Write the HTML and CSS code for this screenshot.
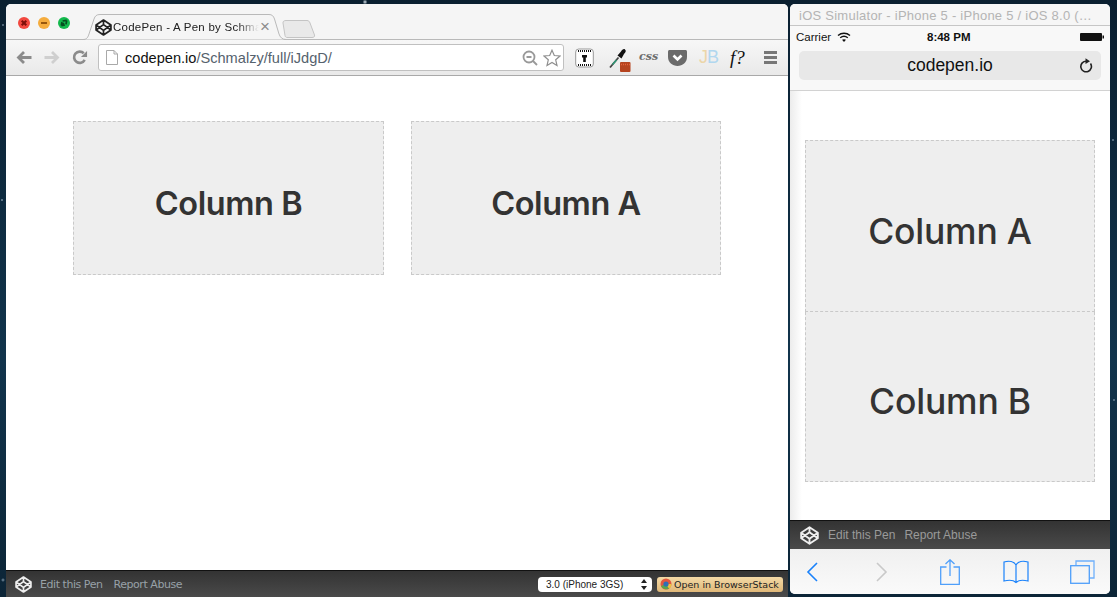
FILE: index.html
```html
<!DOCTYPE html>
<html lang="en">
<head>
  <meta charset="UTF-8">
  <title>CodePen - A Pen by Schmalzy</title>
  <link rel="stylesheet" href="styles.css">
</head>
<body>
  <svg class="defs" width="0" height="0">
    <symbol id="cp" viewBox="0 0 24 24">
      <path d="M12 1.5 22.5 8.5V15.5L12 22.5 1.5 15.5V8.5ZM12 1.5V8M12 16V22.5M1.5 8.5 12 16 22.5 8.5M1.5 15.5 12 8 22.5 15.5" fill="none" stroke="currentColor" stroke-width="2.4" stroke-linejoin="round"/>
    </symbol>
  </svg>

  <!-- browser window -->
  <div class="window browser">
    <div class="tabstrip">
      <div class="lights">
        <svg class="light" viewBox="0 0 12 12"><circle cx="6" cy="6" r="6" fill="#f2483f"/><path d="M3.7 3.7 8.3 8.3M8.3 3.7 3.7 8.3" stroke="#7e0f0a" stroke-width="2"/></svg>
        <svg class="light" viewBox="0 0 12 12"><circle cx="6" cy="6" r="6" fill="#f5ac3d"/><path d="M3 6H9" stroke="#97560c" stroke-width="2"/></svg>
        <svg class="light" viewBox="0 0 12 12"><circle cx="6" cy="6" r="6" fill="#12b94c"/><path d="M3.3 8.7 6 6M8.7 3.3 4.6 4M8.7 3.3 8 7.4M3.3 8.7 4 5M3.3 8.7 7 8" stroke="#064e20" stroke-width="1.7"/></svg>
      </div>
      <div class="tab">
        <svg class="tab-shape" viewBox="0 0 210 26" width="210" height="26"><path d="M0 25.5H3C7 25.5 8 23 9 20L14 5C15 2 16.500 .5 20 .5H189C192 .5 193.500 2 194.500 5L199 20C200 23 202 25.500 206 25.500H210" fill="#f5f5f5" stroke="#b9b9b9"/></svg>
        <svg class="tab-icon"><use href="#cp"/></svg>
        <span class="tab-title">CodePen - A Pen by Schma</span>
        <span class="tab-close">×</span>
      </div>
      <svg class="newtab" viewBox="0 0 34 18" width="34" height="18"><path d="M5 17.500H30C32 17.500 33 16.500 32.500 15L28 3C27.500 1.500 26.500 .5 25 .5H4C2 .5 .7 1.500 1 3L3 15.500C3.200 16.800 4 17.500 5 17.500Z" fill="#e9e9e9" stroke="#c4c4c4"/></svg>
    </div>

    <div class="toolbar">
      <svg class="nav" viewBox="0 0 16 14"><path d="M8 1.500 2.500 7 8 12.500M3 7H15.500" fill="none" stroke="#8b8b8b" stroke-width="2.800"/></svg>
      <svg class="nav" viewBox="0 0 16 14"><path d="M8 1.500 13.500 7 8 12.500M13 7H.5" fill="none" stroke="#cfcfcf" stroke-width="2.800"/></svg>
      <svg class="nav" viewBox="0 0 16 16"><path d="M13 10.500A6 6 0 1 1 12 3.500" fill="none" stroke="#8b8b8b" stroke-width="2.800"/><path d="M15.500 1V7.500H9Z" fill="#8b8b8b"/></svg>
      <div class="omnibox">
        <svg class="page-icon" viewBox="0 0 12 15"><path d="M.5.5H8L11.500 4V14.500H.5ZM8 .5V4H11.500" fill="#fff" stroke="#a9a9a9"/></svg>
        <span class="url"><span class="host">codepen.io</span>/Schmalzy/full/iJdgD/</span>
        <svg class="zoom-icon" viewBox="0 0 16 16"><circle cx="7" cy="7" r="5.500" fill="none" stroke="#999" stroke-width="1.800"/><path d="M4.500 7H9.500M11 11 15 15" stroke="#999" stroke-width="1.800"/></svg>
        <svg class="star-icon" viewBox="0 0 18 18"><path d="M9 1.200 11.300 6.500 17 7 12.700 10.800 14 16.500 9 13.500 4 16.500 5.300 10.800 1 7 6.700 6.500Z" fill="#fff" stroke="#8f8f8f" stroke-width="1.200"/></svg>
      </div>
      <svg class="ext ext-ruler" viewBox="0 0 19 20"><rect x=".7" y="1" width="17.600" height="18" rx="3" fill="#fff" stroke="#999"/><path d="M3 3H16M3 17H16" stroke="#111" stroke-width="2" stroke-dasharray="1 1"/><path d="M7 7H12V9.500H10.800V14H8.200V9.500H7Z" fill="#111"/></svg>
      <svg class="ext ext-dropper" viewBox="0 0 22 24"><path d="M1 19.500 9.500 9.500" stroke="#444" stroke-width="1.800"/><path d="M3.500 16.500 7.500 12" stroke="#2c9a76" stroke-width="1.400"/><path d="M8.500 7.500 12 3.500C13 1.500 15 .5 16 1.500 17.500 2.800 16.500 4.500 15 6L12.500 10.500Z" fill="#111"/><rect x="11" y="14" width="10.500" height="10" rx="1" fill="#b5431e"/><path d="M12 16.500H21" stroke="#e5623a" stroke-width="1.500" stroke-dasharray="1 1"/></svg>
      <span class="ext-css">css</span>
      <svg class="ext ext-pocket" viewBox="0 0 19 16"><path d="M1.500 0H17.500C18.300 0 19 .7 19 1.500V7C19 12.500 14.500 16 9.500 16S0 12.500 0 7V1.500C0 .7.7 0 1.500 0Z" fill="#6b6b6b"/><path d="M5.500 5.500 9.500 9.500 13.500 5.500" fill="none" stroke="#fff" stroke-width="2.600"/></svg>
      <span class="ext-jb"><span class="j">J</span><span class="b">B</span></span>
      <span class="ext-f">f?</span>
      <div class="menu"><i></i><i></i><i></i></div>
    </div>

    <div class="page">
      <div class="cols">
        <div class="col">Column B</div>
        <div class="col">Column A</div>
      </div>
    </div>

    <div class="footer">
      <svg class="cp-logo"><use href="#cp"/></svg>
      <span class="foot-link">Edit this Pen</span>
      <span class="foot-link">Report Abuse</span>
      <div class="device">
        <span>3.0 (iPhone 3GS)</span>
        <svg viewBox="0 0 6 11" width="6" height="11"><path d="M3 0 6 4H0ZM3 11 0 7H6Z" fill="#222"/></svg>
      </div>
      <div class="bs-btn">
        <svg viewBox="0 0 12 12" width="12" height="12"><circle cx="6" cy="6" r="5.500" fill="#e2583e"/><path d="M6 6 1 8A5.500 5.500 0 0 0 9 10.500Z" fill="#5aa64b"/><path d="M6 6 11.500 6A5.500 5.500 0 0 1 9 10.500Z" fill="#eec23e"/><circle cx="6" cy="6" r="2.600" fill="#2f6fb5"/></svg>
        <span>Open in BrowserStack</span>
      </div>
    </div>
  </div>

  <!-- ios simulator window -->
  <div class="window sim">
    <div class="sim-title">iOS Simulator - iPhone 5 - iPhone 5 / iOS 8.0 (…</div>
    <div class="safari-top">
      <div class="status">
        <span class="carrier">Carrier</span>
        <svg class="wifi" viewBox="0 0 14 10" width="14" height="10"><path d="M1 3.500C4.500 .5 9.500 .5 13 3.500M3.200 5.800C5.500 4 8.500 4 10.800 5.800" fill="none" stroke="#111" stroke-width="1.400"/><path d="M5 7.800C6.200 7 7.800 7 9 7.800L7 10Z" fill="#111"/></svg>
        <span class="clock">8:48 PM</span>
        <svg class="battery" viewBox="0 0 24 8" width="24" height="8"><rect width="22" height="8" rx="1" fill="#111"/><rect x="22.500" y="2.500" width="1.500" height="3" fill="#111"/></svg>
      </div>
      <div class="addr">
        <span>codepen.io</span>
        <svg class="addr-reload" viewBox="0 0 14 15" width="14" height="15"><path d="M11.500 5.500A5.300 5.300 0 1 1 7.500 3.200" fill="none" stroke="#222" stroke-width="1.600"/><path d="M6.500 .3 11 3.200 6.500 6Z" fill="#222"/></svg>
      </div>
    </div>
    <div class="sim-page">
      <div class="stack">
        <div class="col">Column A</div>
        <div class="col">Column B</div>
      </div>
    </div>
    <div class="footer sim-footer">
      <svg class="cp-logo"><use href="#cp"/></svg>
      <span class="foot-link">Edit this Pen</span>
      <span class="foot-link">Report Abuse</span>
    </div>
    <div class="safari-bar">
      <svg viewBox="0 0 12 20" width="12" height="20"><path d="M11 1 2 10 11 19" fill="none" stroke="#1a82fb" stroke-width="1.600"/></svg>
      <svg viewBox="0 0 12 20" width="12" height="20"><path d="M1 1 10 10 1 19" fill="none" stroke="#c9c9c9" stroke-width="1.600"/></svg>
      <svg viewBox="0 0 20 26" width="20" height="26"><path d="M6.500 8H.7V25.300H19.300V8H13.500M10 17V1M5.500 5 10 .8 14.500 5" fill="none" stroke="#4f9ffa" stroke-width="1.300"/></svg>
      <svg viewBox="0 0 26 24" width="26" height="24"><path d="M13 5C11 1.500 6 .5 1 2V21C6 19.800 10.500 20 13 22.500 15.500 20 20 19.800 25 21V2C20 .5 15 1.500 13 5ZM13 5V22.500" fill="none" stroke="#1a82fb" stroke-width="1.200"/></svg>
      <svg viewBox="0 0 25 24" width="25" height="24"><path d="M6 5V1H24V18H20" fill="none" stroke="#6fb0fb" stroke-width="1.300"/><rect x=".7" y="5.700" width="18.600" height="17.600" fill="none" stroke="#4f9ffa" stroke-width="1.300"/></svg>
    </div>
  </div>
</body>
</html>
```

FILE: styles.css
```css
/* desktop */
html, body {
  margin: 0;
  height: 100%;
}
body {
  position: relative;
  overflow: hidden;
  font-family: "Liberation Sans", Arial, sans-serif;
  background-color: #0f2b40;
  background-image:
    radial-gradient(circle at 2px 200px, #9fb3c4 0, transparent 1.5px),
    radial-gradient(circle at 3px 25px, #8aa0b3 0, transparent 1.5px),
    radial-gradient(circle at 3px 580px, #7f97aa 0, transparent 2px),
    radial-gradient(circle at 1114px 400px, #8aa0b3 0, transparent 1.5px),
    radial-gradient(circle at 1113px 140px, #8aa0b3 0, transparent 1.5px),
    radial-gradient(circle at 365px 2px, #d7e2ea 0, transparent 2.5px),
    linear-gradient(180deg, #0a1f30, #11344c 60%, #0c2537);
}
.defs {
  position: absolute;
}
.window {
  position: absolute;
  top: 4px;
  display: flex;
  flex-direction: column;
  overflow: hidden;
  background: #fff;
  border-radius: 5px 5px 0 0;
}
.browser {
  left: 6px;
  width: 782px;
  height: 593px;
}
.sim {
  left: 790px;
  width: 320px;
  height: 590px;
  border-radius: 5px;
}

/* tab strip */
.tabstrip {
  flex: none;
  display: flex;
  align-items: flex-end;
  background: #f5f5f5;
  border-bottom: 1px solid #b9b9b9;
  box-sizing: border-box;
  height: 36px;
  padding-left: 12px;
}
.lights {
  display: flex;
  gap: 8px;
  align-self: flex-start;
  margin-top: 13px;
}
.light {
  width: 12px;
  height: 12px;
}
.tab {
  position: relative;
  width: 206px;
  height: 25px;
  margin-left: 10px;
  margin-bottom: -1px;
  display: flex;
  align-items: center;
  box-sizing: border-box;
  padding: 0 0 1px 15px;
}
.tab-shape {
  position: absolute;
  left: 0;
  top: -1px;
}
.tab-icon {
  position: relative;
  width: 17px;
  height: 17px;
  color: #222;
  flex: none;
}
.tab-title {
  position: relative;
  flex: none;
  width: 146px;
  white-space: nowrap;
  font-size: 11.500px;
  color: #222;
  margin-left: 1px;
  letter-spacing: .25px;
  -webkit-mask-image: linear-gradient(90deg, #000 85%, transparent 100%);
  mask-image: linear-gradient(90deg, #000 85%, transparent 100%);
}
.tab-close {
  position: relative;
  flex: none;
  margin-left: 1px;
  font-size: 17px;
  line-height: 14px;
  color: #8c8c8c;
}
.newtab {
  margin: 0 0 1px -4px;
}

/* toolbar */
.toolbar {
  flex: none;
  height: 36px;
  box-sizing: border-box;
  display: flex;
  align-items: center;
  padding: 0 0 0 10px;
  background: linear-gradient(#f7f7f7, #e9e9e9);
  border-bottom: 1px solid #a9a9a9;
}
.nav {
  width: 16px;
  height: 15px;
  margin-right: 12px;
}
.omnibox {
  width: 466px;
  height: 27px;
  box-sizing: border-box;
  margin-left: -2px;
  display: flex;
  align-items: center;
  padding: 0 2px 0 7px;
  background: #fff;
  border: 1px solid #c0c0c0;
  border-radius: 3px;
}
.page-icon {
  width: 12px;
  height: 15px;
  flex: none;
}
.url {
  flex: 1;
  margin-left: 7px;
  font-size: 14.600px;
  color: #55626d;
}
.host {
  color: #111;
}
.zoom-icon {
  width: 16px;
  height: 16px;
  margin-right: 5px;
}
.star-icon {
  width: 18px;
  height: 18px;
}
.ext {
  flex: none;
}
.ext-ruler {
  width: 19px;
  height: 20px;
  margin-left: 11px;
}
.ext-dropper {
  width: 22px;
  height: 24px;
  margin: 4px 0 0 15px;
}
.ext-css {
  margin: -2px 0 0 8px;
  width: 21px;
  font: italic bold 11px "DejaVu Serif", serif;
  color: #6d6d6d;
}
.ext-pocket {
  width: 19px;
  height: 16px;
  margin-left: 8px;
}
.ext-jb {
  width: 20px;
  margin-left: 12px;
  font-size: 18px;
  letter-spacing: -1px;
}
.ext-jb .j {
  color: #ecd6a9;
}
.ext-jb .b {
  color: #b1d7ef;
}
.ext-f {
  width: 22px;
  margin-left: 11px;
  font: italic 19px "Liberation Serif", serif;
  color: #111;
}
.menu {
  width: 13px;
  margin-left: 12px;
  display: flex;
  flex-direction: column;
  gap: 2px;
}
.menu i {
  height: 3px;
  background: #777;
}

/* page content */
.page {
  flex: 1;
  padding: 45px 0 0 67px;
  background: #fff;
}
.cols {
  display: flex;
  gap: 27px;
}
.col {
  box-sizing: border-box;
  display: flex;
  align-items: center;
  justify-content: center;
  background: #eee;
  border: 1px dashed #c9c9c9;
  color: #333;
  font-family: Inter, "Liberation Sans", sans-serif;
}
.cols .col {
  width: 311px;
  height: 154px;
  padding-top: 10px;
  font-size: 32.500px;
  font-weight: 600;
  letter-spacing: -.45px;
}
.cols .col + .col {
  width: 310px;
}

/* footer bar */
.footer {
  flex: none;
  height: 27px;
  box-sizing: border-box;
  display: flex;
  align-items: center;
  padding-left: 9px;
  background: linear-gradient(#333, #4a4a4a);
  border-top: 1px solid #111;
}
.cp-logo {
  width: 17px;
  height: 17px;
  color: #eee;
  margin-right: 8px;
}
.foot-link {
  font: 11px "DejaVu Sans", sans-serif;
  letter-spacing: -.45px;
  color: #98a1a8;
  margin-right: 11px;
}
.device {
  margin-left: auto;
  width: 114px;
  height: 15px;
  box-sizing: border-box;
  display: flex;
  align-items: center;
  justify-content: space-between;
  padding: 0 5px 0 8px;
  background: #fff;
  border-radius: 4px;
  font-size: 10px;
  color: #222;
}
.bs-btn {
  width: 126px;
  height: 15px;
  box-sizing: border-box;
  margin: 0 5px;
  display: flex;
  align-items: center;
  gap: 2px;
  padding-left: 3px;
  background: linear-gradient(#f3d9a6, #e0b878);
  border-radius: 3px;
  font: 9.500px "DejaVu Sans", sans-serif;
  color: #222;
  white-space: nowrap;
}

/* simulator */
.sim-title {
  flex: none;
  height: 22px;
  box-sizing: border-box;
  padding: 4px 0 0 9px;
  background: #f6f6f6;
  border-bottom: 1px solid #c6c6c6;
  font-size: 13px;
  letter-spacing: .25px;
  color: #b4b4b4;
  white-space: nowrap;
}
.safari-top {
  flex: none;
  height: 65px;
  box-sizing: border-box;
  background: #f8f8f8;
  border-bottom: 1px solid #d2d2d2;
}
.status {
  height: 22px;
  position: relative;
  display: flex;
  align-items: center;
  padding: 0 4px 0 6px;
  font-size: 11.500px;
  color: #111;
}
.wifi {
  margin-left: 6px;
}
.clock {
  position: absolute;
  left: 137px;
  font-weight: bold;
  font-size: 11.500px;
}
.battery {
  margin-left: auto;
  margin-right: 2px;
}
.addr {
  position: relative;
  height: 29px;
  margin: 3px 9px 0;
  display: flex;
  align-items: center;
  justify-content: center;
  background: #e8e8e8;
  border-radius: 5px;
  font-size: 17.500px;
  color: #111;
}
.addr-reload {
  position: absolute;
  right: 8px;
  top: 7px;
}
.sim-page {
  flex: 1;
  padding: 49px 15px 0;
  background: linear-gradient(90deg, #ececec, #fff 12px);
}
.stack {
  display: flex;
  flex-direction: column;
}
.stack .col {
  height: 172px;
  padding-top: 10px;
  font-size: 35.500px;
  font-weight: 500;
  letter-spacing: -.2px;
}
.stack .col + .col {
  height: 170px;
  border-top: 0;
}
.sim-footer {
  height: 29px;
  padding-left: 10px;
}
.sim-footer .cp-logo {
  width: 19px;
  height: 19px;
  margin-right: 9px;
}
.sim-footer .foot-link {
  font: 12px "Liberation Sans", sans-serif;
  letter-spacing: 0;
  color: #9a9a9a;
  margin-right: 9px;
}
.safari-bar {
  flex: none;
  height: 45px;
  box-sizing: border-box;
  display: flex;
  align-items: center;
  padding-left: 16px;
  background: linear-gradient(#f0f0f0, #fafafa);
}
.safari-bar svg:nth-child(2) {
  margin-left: 58px;
}
.safari-bar svg:nth-child(3) {
  margin-left: 52px;
}
.safari-bar svg:nth-child(4) {
  margin-left: 43px;
}
.safari-bar svg:nth-child(5) {
  margin-left: 41px;
}
```
